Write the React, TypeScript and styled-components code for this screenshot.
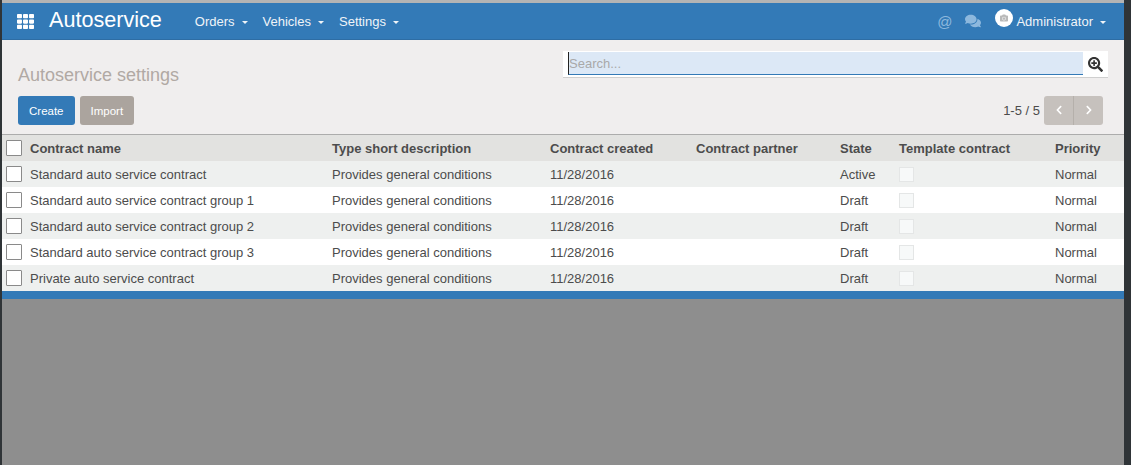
import styled, { createGlobalStyle } from 'styled-components';
import { FaChevronLeft, FaChevronRight, FaComments, FaSearchPlus, FaTh, FaCamera } from 'react-icons/fa';

const GlobalStyle = createGlobalStyle`
  html, body {
    margin: 0;
    padding: 0;
    height: 100%;
    overflow: hidden;
    background: #2f3437;
  }
  #root {
    height: 100%;
  }
`;

const Screen = styled.div`
  display: flex;
  height: 465px;
  padding: 0 7px 0 2px;
  box-sizing: border-box;
  background: #2f3437;
  font-family: 'Liberation Sans', Arial, sans-serif;
  font-size: 13px;
  color: #4c4c4c;
`;

const Frame = styled.div`
  flex: 1;
  display: flex;
  flex-direction: column;
  min-width: 0;
  border-top: 3px solid #b4b4b4;
  background: #8e8e8e;
`;

const NavBar = styled.div`
  display: flex;
  align-items: center;
  height: 37px;
  flex-shrink: 0;
  padding: 0 18px 0 15px;
  box-sizing: border-box;
  background: #337ab7;
  border-bottom: 1px solid #2e6da4;
  color: #fff;
`;

const Brand = styled.div`
  font-size: 21.6px;
  margin: 0 33px 0 15px;
  line-height: 37px;
  position: relative;
  top: -2px;
`;

const Menu = styled.div`
  display: flex;
  align-items: center;
  gap: 15px;
`;

const MenuItem = styled.div`
  display: flex;
  align-items: center;
  gap: 7px;
  color: #f0f4f8;
`;

const Caret = styled.span`
  width: 0;
  height: 0;
  border-top: 3px solid currentColor;
  border-left: 3px solid transparent;
  border-right: 3px solid transparent;
  margin-top: 2px;
`;

const NavRight = styled.div`
  display: flex;
  align-items: center;
  margin-left: auto;
`;

const AtSign = styled.span`
  font-size: 15px;
  color: #8db8dd;
  margin-right: 13px;
`;

const Avatar = styled.span`
  display: flex;
  align-items: center;
  justify-content: center;
  width: 18px;
  height: 18px;
  border-radius: 50%;
  background: #fff;
  color: #b9b9b9;
  margin: -7px 3px 0 14px;
`;

const ControlPanel = styled.div`
  flex-shrink: 0;
  height: 95px;
  box-sizing: border-box;
  padding: 11px 16px 0;
  background: #f0eeee;
  border-bottom: 1px solid #acacac;
  display: grid;
  grid-template-columns: 1fr 545px;
  grid-template-rows: 45px 28px;
  row-gap: 0;
`;

const Title = styled.div`
  font-size: 18px;
  color: #b1a9a4;
  align-self: center;
  padding-top: 4px;
`;

const SearchBox = styled.div`
  display: flex;
  align-items: flex-start;
  height: 27px;
  width: 545px;
  box-sizing: border-box;
  padding-top: 1px;
  background: #fff;
  border-bottom: 1px solid #cfcfcf;
  margin-right: 0;
`;

const SearchInput = styled.div`
  width: 515px;
  margin-left: 5px;
  height: 23px;
  box-sizing: border-box;
  background: #dce8f6;
  border-bottom: 1px solid #337ab7;
  border-left: 1px solid #222;
  color: #a9a9a9;
  line-height: 23px;
  font-size: 13px;
  padding-left: 0;
`;

const SearchIcon = styled.span`
  display: flex;
  margin: 5px 0 0 5px;
  color: #333;
`;

const Buttons = styled.div`
  display: flex;
  gap: 5px;
`;

const Button = styled.button<{ $primary?: boolean }>`
  height: 29px;
  padding: 0 11px;
  border: none;
  border-radius: 3px;
  font: 11.5px 'Liberation Sans', Arial, sans-serif;
  color: #fff;
  background: ${(p) => (p.$primary ? '#337ab7' : '#aba49e')};
`;

const Pager = styled.div`
  display: flex;
  align-items: center;
  justify-content: flex-end;
  padding-right: 5px;
  gap: 4px;
`;

const PagerGroup = styled.div`
  display: flex;
  height: 29px;
  border-radius: 3px;
  overflow: hidden;
  background: #c6c1bd;
`;

const PagerButton = styled.span`
  display: flex;
  align-items: center;
  justify-content: center;
  width: 29px;
  color: #fff;
  & + & {
    border-left: 1px solid #b5b0ab;
  }
`;

const Row = styled.div<{ $bg: string }>`
  flex-shrink: 0;
  display: grid;
  grid-template-columns: 28px 302px 218px 146px 144px 59px 156px 1fr;
  align-items: center;
  height: 26px;
  background: ${(p) => p.$bg};
`;

const HeaderRow = styled(Row)`
  font-weight: 700;
  color: #4c4c4c;
`;

const Check = styled.span`
  display: block;
  width: 14px;
  height: 14px;
  margin-left: 4px;
  background: #fff;
  border: 1px solid #8a8a8a;
  border-radius: 1px;
`;

const FadedCheck = styled.span`
  display: block;
  width: 13px;
  height: 13px;
  background: #f7f9f9;
  border: 1px solid #e4e6e6;
`;

const BlueBar = styled.div`
  flex-shrink: 0;
  height: 8px;
  background: #337ab7;
`;

const contracts = [
  { name: 'Standard auto service contract', state: 'Active' },
  { name: 'Standard auto service contract group 1', state: 'Draft' },
  { name: 'Standard auto service contract group 2', state: 'Draft' },
  { name: 'Standard auto service contract group 3', state: 'Draft' },
  { name: 'Private auto service contract', state: 'Draft' },
];

export default function App() {
  return (
    <Screen>
      <GlobalStyle />
      <Frame>
        <NavBar>
          <FaTh size={17} />
          <Brand>Autoservice</Brand>
          <Menu>
            {['Orders', 'Vehicles', 'Settings'].map((item) => (
              <MenuItem key={item}>
                {item}
                <Caret />
              </MenuItem>
            ))}
          </Menu>
          <NavRight>
            <AtSign>@</AtSign>
            <FaComments size={16} color="#8db8dd" />
            <Avatar>
              <FaCamera size={8} />
            </Avatar>
            <MenuItem>
              Administrator
              <Caret />
            </MenuItem>
          </NavRight>
        </NavBar>
        <ControlPanel>
          <Title>Autoservice settings</Title>
          <SearchBox>
            <SearchInput>Search...</SearchInput>
            <SearchIcon>
              <FaSearchPlus size={15} />
            </SearchIcon>
          </SearchBox>
          <Buttons>
            <Button $primary>Create</Button>
            <Button>Import</Button>
          </Buttons>
          <Pager>
            1-5 / 5
            <PagerGroup>
              <PagerButton>
                <FaChevronLeft size={10} />
              </PagerButton>
              <PagerButton>
                <FaChevronRight size={10} />
              </PagerButton>
            </PagerGroup>
          </Pager>
        </ControlPanel>
        <HeaderRow $bg="#e2e2e0">
          <Check />
          <div>Contract name</div>
          <div>Type short description</div>
          <div>Contract created</div>
          <div>Contract partner</div>
          <div>State</div>
          <div>Template contract</div>
          <div>Priority</div>
        </HeaderRow>
        {contracts.map((c, i) => (
          <Row key={c.name} $bg={i % 2 === 0 ? '#eef0ef' : '#ffffff'}>
            <Check />
            <div>{c.name}</div>
            <div>Provides general conditions</div>
            <div>11/28/2016</div>
            <div />
            <div>{c.state}</div>
            <div>
              <FadedCheck />
            </div>
            <div>Normal</div>
          </Row>
        ))}
        <BlueBar />
      </Frame>
    </Screen>
  );
}
